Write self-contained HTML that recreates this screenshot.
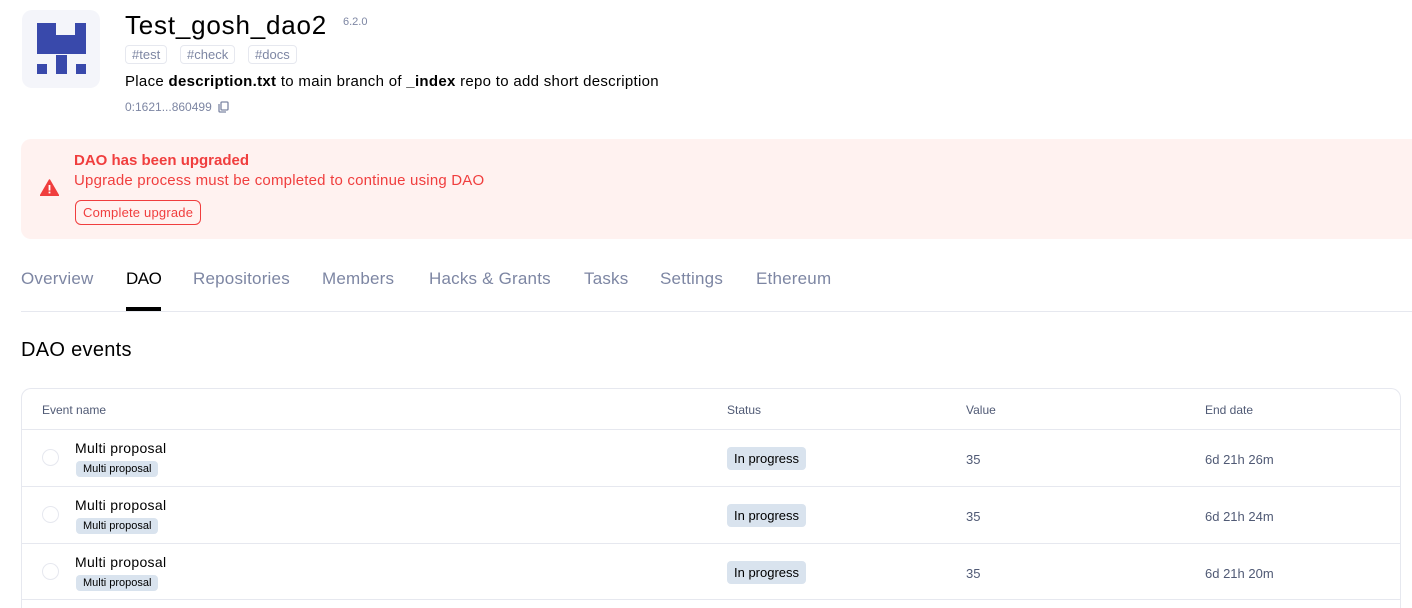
<!DOCTYPE html>
<html><head><meta charset="utf-8"><style>
*{margin:0;padding:0;box-sizing:border-box}
html,body{width:1412px;height:608px;overflow:hidden}
body{background:#fff;font-family:"Liberation Sans",sans-serif;color:#000;position:relative}
.a{position:absolute;white-space:nowrap}
.tag{position:absolute;top:45px;height:19px;border:1px solid #e6e8ef;border-radius:4px;color:#7d86a3;font-size:13px;line-height:17px;padding:0 6px}
.tab{position:absolute;top:269px;font-size:17px;color:#7d86a3;letter-spacing:0.2px}
.row{position:absolute;left:22px;width:1378px;height:57px;border-top:1px solid #e6e8ef}
.pill{position:absolute;background:#d9e3ee;border-radius:4px;font-size:12px;line-height:14px;padding:1px 7px}
</style></head><body>
<div class="a" style="left:22px;top:10px;width:78px;height:78px;background:#f4f5fa;border-radius:10px"></div>
<svg class="a" style="left:37px;top:23px" width="50" height="52"><g fill="#3949ab">
<path d="M0 0H19V12H38V0H49V31H0Z"/>
<rect x="0" y="41" width="10" height="10"/><rect x="19" y="32" width="11" height="19"/><rect x="39" y="41" width="10" height="10"/></g></svg>
<div class="a" style="left:125px;top:10px;font-size:26px;letter-spacing:0.8px">Test_gosh_dao2</div>
<div class="a" style="left:343px;top:16px;font-size:11px;color:#7d86a3">6.2.0</div>
<div class="tag" style="left:125px">#test</div>
<div class="tag" style="left:180px">#check</div>
<div class="tag" style="left:248px">#docs</div>
<div class="a" style="left:125px;top:73px;font-size:15px;letter-spacing:0.3px">Place <b>description.txt</b> to main branch of <b>_index</b> repo to add short description</div>
<div class="a" style="left:125px;top:100px;font-size:12px;color:#7d86a3">0:1621...860499</div>
<svg class="a" style="left:218px;top:101px" width="11" height="12" fill="none" stroke="#7d86a3" stroke-width="1.3"><rect x="3" y="1" width="7" height="8" rx="1"/><path d="M1 3v7a1 1 0 0 0 1 1h6"/></svg>
<div class="a" style="left:21px;top:139px;width:1391px;height:100px;background:#fff2f0;border-radius:10px 0 0 10px"></div>
<svg class="a" style="left:40px;top:179px" width="19" height="17"><path d="M9.5 1L18.5 16.5H0.5Z" fill="#f03e3e" stroke="#f03e3e" stroke-linejoin="round" stroke-width="1.5"/><rect x="8.6" y="6" width="1.8" height="5.5" fill="#fff"/><rect x="8.6" y="12.6" width="1.8" height="1.8" fill="#fff"/></svg>
<div class="a" style="left:74px;top:152px;font-size:15px;color:#f03e3e;font-weight:bold">DAO has been upgraded</div>
<div class="a" style="left:74px;top:172px;font-size:15px;color:#f03e3e;letter-spacing:0.2px">Upgrade process must be completed to continue using DAO</div>
<div class="a" style="left:75px;top:200px;height:25px;border:1px solid #f03e3e;border-radius:6px;color:#f03e3e;font-size:13px;line-height:23px;padding:0 7px;letter-spacing:0.2px">Complete upgrade</div>
<div class="tab" style="left:21px">Overview</div>
<div class="tab" style="left:126px;color:#000;letter-spacing:-0.5px">DAO</div>
<div class="tab" style="left:193px">Repositories</div>
<div class="tab" style="left:322px">Members</div>
<div class="tab" style="left:429px">Hacks &amp; Grants</div>
<div class="tab" style="left:584px">Tasks</div>
<div class="tab" style="left:660px">Settings</div>
<div class="tab" style="left:756px">Ethereum</div>
<div class="a" style="left:21px;top:311px;width:1391px;height:1px;background:#e6e8ef"></div>
<div class="a" style="left:126px;top:307px;width:35px;height:4px;background:#000"></div>
<div class="a" style="left:21px;top:339px;font-size:20px;letter-spacing:0.3px">DAO events</div>
<div class="a" style="left:21px;top:388px;width:1380px;height:220px;border:1px solid #e6e8ef;border-bottom:none;border-radius:10px 10px 0 0"></div>
<div class="a" style="left:42px;top:403px;font-size:12px;color:#505a75">Event name</div>
<div class="a" style="left:727px;top:403px;font-size:12px;color:#505a75">Status</div>
<div class="a" style="left:966px;top:403px;font-size:12px;color:#505a75">Value</div>
<div class="a" style="left:1205px;top:403px;font-size:12px;color:#505a75">End date</div>
<div class="row" style="top:429px"></div><div class="row" style="top:486px"></div><div class="row" style="top:543px;height:57px;border-bottom:1px solid #e6e8ef"></div>

<div class="a" style="left:42px;top:449px;width:17px;height:17px;border:1.5px solid #e6e8ef;border-radius:50%"></div>
<div class="a" style="left:75px;top:440px;font-size:14px;letter-spacing:0.3px">Multi proposal</div>
<div class="pill" style="left:76px;top:461px;font-size:11px">Multi proposal</div>
<div class="pill" style="left:727px;top:447px;height:23px;line-height:21px;font-size:13px">In progress</div>
<div class="a" style="left:966px;top:452px;font-size:13px;color:#505a75">35</div>
<div class="a" style="left:1205px;top:452px;font-size:13px;color:#505a75">6d 21h 26m</div>

<div class="a" style="left:42px;top:506px;width:17px;height:17px;border:1.5px solid #e6e8ef;border-radius:50%"></div>
<div class="a" style="left:75px;top:497px;font-size:14px;letter-spacing:0.3px">Multi proposal</div>
<div class="pill" style="left:76px;top:518px;font-size:11px">Multi proposal</div>
<div class="pill" style="left:727px;top:504px;height:23px;line-height:21px;font-size:13px">In progress</div>
<div class="a" style="left:966px;top:509px;font-size:13px;color:#505a75">35</div>
<div class="a" style="left:1205px;top:509px;font-size:13px;color:#505a75">6d 21h 24m</div>

<div class="a" style="left:42px;top:563px;width:17px;height:17px;border:1.5px solid #e6e8ef;border-radius:50%"></div>
<div class="a" style="left:75px;top:554px;font-size:14px;letter-spacing:0.3px">Multi proposal</div>
<div class="pill" style="left:76px;top:575px;font-size:11px">Multi proposal</div>
<div class="pill" style="left:727px;top:561px;height:23px;line-height:21px;font-size:13px">In progress</div>
<div class="a" style="left:966px;top:566px;font-size:13px;color:#505a75">35</div>
<div class="a" style="left:1205px;top:566px;font-size:13px;color:#505a75">6d 21h 20m</div>
</body></html>
